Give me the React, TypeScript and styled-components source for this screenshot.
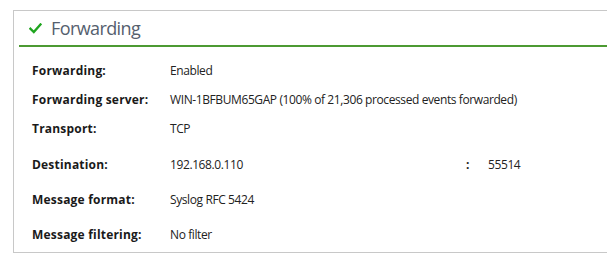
import React from 'react';
import styled, { createGlobalStyle } from 'styled-components';

const GlobalStyle = createGlobalStyle`
    html, body {
        margin: 0;
        padding: 0;
        background: #ffffff;
        overflow: hidden;
    }
    body {
        font-family: 'Open Sans', 'Noto Sans', sans-serif;
    }
`;

type Setting = {
    label: string;
    value: string;
    port?: string;
    tall?: boolean;
};

const settings: Setting[] = [
    { label: 'Forwarding:', value: 'Enabled' },
    { label: 'Forwarding server:', value: 'WIN-1BFBUM65GAP (100% of 21,306 processed events forwarded)' },
    { label: 'Transport:', value: 'TCP' },
    { label: 'Destination:', value: '192.168.0.110', port: '55514', tall: true },
    { label: 'Message format:', value: 'Syslog RFC 5424', tall: true },
    { label: 'Message filtering:', value: 'No filter', tall: true },
];

const CheckIcon = () => (
    <svg width="13" height="11" viewBox="0 0 13 11">
        <path d="M1.5 5.8 L4.8 9 L11.5 1.5" fill="none" stroke="#1fa51f" strokeWidth="2.4" strokeLinecap="square" />
    </svg>
);

const App: React.FC = () => (
    <>
        <GlobalStyle />
        <Panel>
            <Header>
                <CheckIcon />
                <Title>Forwarding</Title>
            </Header>
            <Rows>
                {settings.map(s => (
                    <Row key={s.label} tall={s.tall}>
                        <Label>{s.label}</Label>
                        <Value>{s.value}</Value>
                        {s.port && (
                            <>
                                <Colon>:</Colon>
                                <Value>{s.port}</Value>
                            </>
                        )}
                    </Row>
                ))}
            </Rows>
        </Panel>
    </>
);

export default App;

const Panel = styled.div`
    margin: 10px 0 0 13px;
    width: 640px;
    height: 241px;
    border: 1px solid #c8c8c8;
    box-sizing: content-box;
`;

const Header = styled.div`
    display: flex;
    align-items: center;
    gap: 9px;
    margin-left: 5px;
    height: 34px;
    padding-left: 10px;
    border-bottom: 2px solid #4c9a32;
`;

const Title = styled.h2`
    margin: 0;
    font-family: 'Open Sans', 'Noto Sans', sans-serif;
    font-size: 18px;
    font-weight: 400;
    letter-spacing: -0.6px;
    color: #55606e;
`;

const Rows = styled.div`
    display: flex;
    flex-direction: column;
    padding: 9px 0 0 18px;
`;

const Row = styled.div<{ tall?: boolean }>`
    display: grid;
    grid-template-columns: 138px 296px 22px auto;
    align-items: center;
    height: ${p => (p.tall ? '35px' : '29px')};
    &:nth-child(4) {
        margin-top: 4px;
    }
`;

const Label = styled.span`
    font-size: 12px;
    font-weight: 700;
    letter-spacing: 0.2px;
    color: #1a1a1a;
`;

const Value = styled.span`
    font-size: 12px;
    letter-spacing: -0.4px;
    color: #222222;
    white-space: nowrap;
`;

const Colon = styled.span`
    font-size: 12px;
    font-weight: 700;
    color: #222222;
`;
